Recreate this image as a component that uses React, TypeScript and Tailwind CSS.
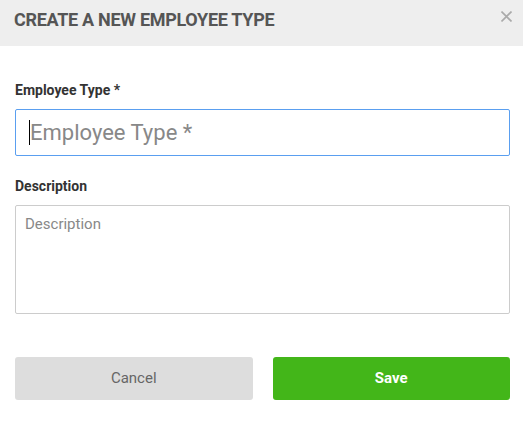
export default function App() {
  return (
    <div className="w-[523px] h-[422px] bg-white font-['Roboto',sans-serif] flex flex-col">
      <div className="h-[46px] bg-[#eeeeee] flex items-start justify-between pl-[14px] pr-[11px] shrink-0">
        <h2 className="mt-[9px] text-[18px] font-bold text-[#555555] leading-[22px] tracking-[-0.3px]">CREATE A NEW EMPLOYEE TYPE</h2>
        <svg className="mt-[11px]" width="11" height="11" viewBox="0 0 11 11">
          <path d="M0.5 0.5 L10.5 10.5 M10.5 0.5 L0.5 10.5" stroke="#aaaaaa" strokeWidth="1.6" />
        </svg>
      </div>

      <div className="pl-[15px] pr-[13px] pt-[36px] flex flex-col">
        <label className="text-[14px] font-bold text-[#333333] leading-[16px]">Employee Type *</label>
        <div className="mt-[11px] h-[47px] border border-[#5a9ff0] rounded-[2px] flex items-center pl-[13px]">
          <span className="w-px h-[25px] bg-black" />
          <input
            placeholder="Employee Type *"
            className="flex-1 min-w-0 outline-none text-[22px] text-[#333] placeholder:text-[#888888] bg-transparent"
          />
        </div>

        <label className="mt-[22px] text-[14px] font-bold text-[#333333] leading-[16px]">Description</label>
        <textarea
          placeholder="Description"
          className="mt-[11px] h-[109px] resize-none border border-[#cccccc] rounded-[2px] px-[9px] py-[7px] text-[15px] outline-none placeholder:text-[#888888]"
        />

        <div className="mt-[43px] flex gap-[20px]">
          <button className="flex-1 h-[43px] rounded-[3px] bg-[#dddddd] text-[15px] text-[#666666]">Cancel</button>
          <button className="flex-1 h-[43px] rounded-[3px] bg-[#43b619] text-[15px] font-bold text-white">Save</button>
        </div>
      </div>
    </div>
  )
}
